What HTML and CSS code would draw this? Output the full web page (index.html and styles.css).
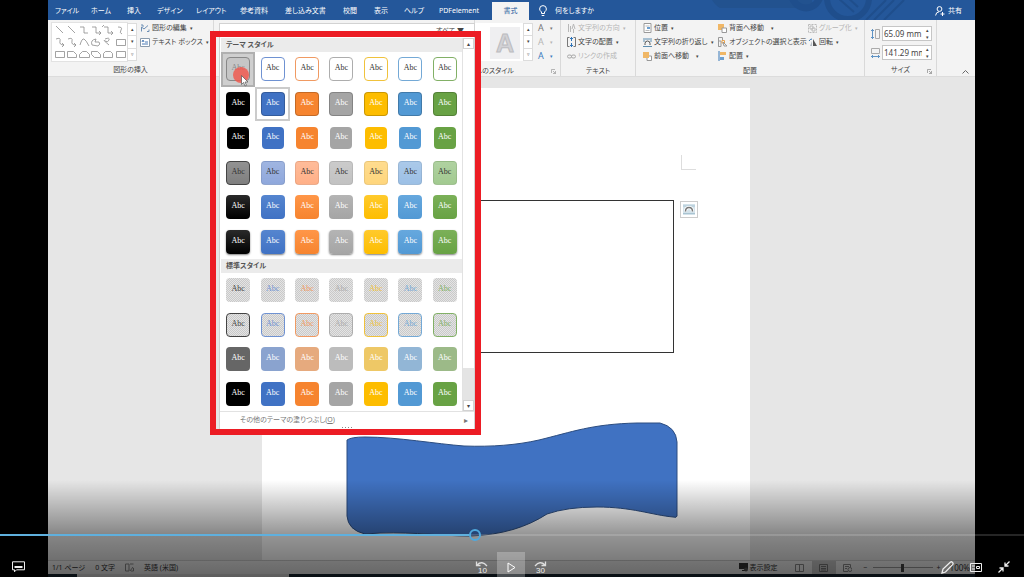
FILE: index.html
```
<!DOCTYPE html>
<html lang="ja">
<head>
  <meta charset="utf-8">
  <title>図形の書式</title>
  <link rel="stylesheet" href="styles.css">
</head>

<body>
  <div class="word">
    <nav class="tabs">
      <svg class="deco" width="250" height="20" viewBox="0 0 250 20">
        <path d="M0 0h112v5q0 3-4 3H20q-4-2-8-8z" fill="#22528f"/>
        <circle cx="106" cy="-6" r="14" fill="none" stroke="#1f4e8c" stroke-width="7"/>
        <circle cx="148" cy="-2" r="21" fill="none" stroke="#1f4e8c" stroke-width="6"/>
        <path d="M138-2l16 14M146-4l12 11M166 20l20-20M174 20l20-20M184 20l20-20" stroke="#1f4e8c" stroke-width="2"/>
      </svg>
      <a href="#">ファイル</a>
      <a href="#">ホーム</a>
      <a href="#">挿入</a>
      <a href="#">デザイン</a>
      <a href="#">レイアウト</a>
      <a href="#">参考資料</a>
      <a href="#">差し込み文書</a>
      <a href="#">校閲</a>
      <a href="#">表示</a>
      <a href="#">ヘルプ</a>
      <a href="#">PDFelement</a>
      <a href="#" class="active">書式</a>
      <a href="#" class="tell">
        <svg width="8" height="12" viewBox="0 0 8 12" fill="none" stroke="#fff"><path d="M2.500 8.500V7Q.6 5.500.6 4a3.400 3.400 0 0 1 6.800 0Q7.400 5.500 5.500 7v1.500zM2.700 10.500h2.600"/></svg>
        何をしますか
      </a>
      <a href="#" class="share">
        <svg width="10" height="10" viewBox="0 0 10 10" fill="none" stroke="#fff"><circle cx="4.500" cy="3" r="2.400"/><path d="M.6 9.500Q1 6 4 5.800M7.500 6v4M5.500 8h4"/></svg>
        共有
      </a>
    </nav>

    <div class="ribbon">
      <section class="group g-insert">
        <div class="group-body">
          <svg class="shapes" width="75" height="38" viewBox="0 0 75 38" fill="none" stroke="#8c8c8c" stroke-width=".8">
            <path d="M4 3l7 7M16 3l7 7M28 4h4v6h4M40 4h4v6h5M47 8l2 2-2 2M52 4h4v6h5M59 8l2 2-2 2M50 4l2-2M66 4q5 0 3 3t1 4"/>
            <path d="M4 16q5-2 4 2t4 4M10 20l2 2-2 2M16 16q5-2 4 2t4 4M22 20l2 2-2 2M28 22q2-7 4-6t5 7M40 22q-2-5 4-6l-1 3h4q2 2-1 4zM53 16q5-2 4 1t-4 1 4 4M64.500 16.500h9v6h-9z"/>
            <path d="M3.500 28.500h9v6h-9zM15.500 28.500h6l3 3v3h-9zM27.500 34.500v-3l3-3h4l3 3v3zM39.500 28.500h6l3 3v3h-6l-3-3zM51.500 34.500v-4l2-2h5l2 2v4zM64.500 28.500h9v6h-9z"/>
          </svg>
          <div class="spin"><button>▴</button><button>▾</button><button>▿</button></div>
          <div class="col">
            <button class="cmd"><svg width="10" height="9" viewBox="0 0 10 9" fill="none" stroke="#6d8fb5"><path d="M1.500 7.500V3L4 5l4-3.500M1 1h2v2M7 7.500h2v-2" /></svg>図形の編集<i>▾</i></button>
            <button class="cmd"><svg width="10" height="9" viewBox="0 0 10 9" fill="#fff" stroke="#8a9bad"><path d="M.5.5h9v8h-9z"/><path d="M2 4l1-2 1 2M5 4h3M2 6h6" stroke="#4a7ab5"/></svg>テキスト ボックス<i>▾</i></button>
          </div>
        </div>
        <h2>図形の挿入</h2>
      </section>

      <section class="group g-style">
        <div class="group-body"></div>
      </section>

      <section class="group g-art">
        <div class="group-body">
          <div class="art"><span>A</span></div>
          <div class="spin"><button>▴</button><button>▾</button><button>▿</button></div>
          <div class="col letters">
            <button class="cmd">A<i>▾</i></button>
            <button class="cmd off">A<i>▾</i></button>
            <button class="cmd glow">A<i>▾</i></button>
          </div>
        </div>
        <h2>へのスタイル</h2>
        <svg class="launch" width="5" height="5" viewBox="0 0 5 5" fill="none" stroke="#999" stroke-width=".7"><path d="M.5 4V.5H4M2 2l2.500 2.500V2M4.500 4.500H2"/></svg>
      </section>

      <section class="group g-text">
        <div class="group-body">
          <div class="col">
            <button class="cmd off"><svg width="9" height="10" viewBox="0 0 9 10" fill="none" stroke="#b8b8b8"><path d="M1.500 1v8M3.500 3v6M5 6l1.500-5L8 6M6.500 6v4"/></svg>文字列の方向<i>▾</i></button>
            <button class="cmd"><svg width="9" height="10" viewBox="0 0 9 10" fill="none" stroke="#777"><path d="M2.500.5h-2v9h2M6.500.5h2v9h-2"/><path d="M4.500 0v4M3 2l1.500-1.500L6 2M4.500 6v4M3 8l1.500 1.500L6 8" stroke="#2f74b8"/></svg>文字の配置<i>▾</i></button>
            <button class="cmd off"><svg width="9" height="5" viewBox="0 0 9 5" fill="none" stroke="#a8a8a8"><rect x=".5" y="1" width="4" height="3" rx="1.500"/><rect x="4.500" y="1" width="4" height="3" rx="1.500"/></svg>リンクの作成</button>
          </div>
        </div>
        <h2>テキスト</h2>
      </section>

      <section class="group g-arrange">
        <div class="group-body">
          <div class="col">
            <button class="cmd"><svg width="9" height="10" viewBox="0 0 9 10" fill="none" stroke="#9a9a9a"><path d="M1 .5h7v9H1z" fill="#fff"/><path d="M2.500 3h4M2.500 7.500h4" stroke="#bbb"/><path d="M4 4h3v2H4z" fill="#6c9fd0" stroke="none"/></svg>位置<i>▾</i></button>
            <button class="cmd"><svg width="9" height="9" viewBox="0 0 9 9" fill="none" stroke="#5c8db0"><path d="M0 1h9M0 8.500h9M0 3h2M7 3h2"/><path d="M2 7V5.500a2.500 2.500 0 0 1 5 0V7" stroke="#555"/></svg>文字列の折り返し<i>▾</i></button>
            <button class="cmd"><svg width="9" height="9" viewBox="0 0 9 9"><path d="M4 4h4.500v4.500H4z" fill="#fff" stroke="#999"/><path d="M0 0h6v6H0z" fill="#f0b766"/></svg>前面へ移動<i class="far">▾</i></button>
          </div>
          <div class="col">
            <button class="cmd"><svg width="9" height="9" viewBox="0 0 9 9"><path d="M0 0h6v6H0z" fill="#f0b766"/><path d="M4 4h4.500v4.500H4z" fill="#fff" stroke="#999"/></svg>背面へ移動<i class="far">▾</i></button>
            <button class="cmd"><svg width="9" height="10" viewBox="0 0 9 10" fill="none" stroke="#999"><path d="M.5 9.500v-9h4v3M.5 4H3v5.500H.5z"/><path d="M4 3.500h2.500V6H4z" stroke="#e8a34e"/><path d="M5 5l4 4H6z" fill="#fff"/></svg>オブジェクトの選択と表示</button>
            <button class="cmd"><svg width="9" height="10" viewBox="0 0 9 10"><path d="M1 0v10" stroke="#3979b8"/><path d="M2 1h6v3H2z" fill="#f0b766"/><path d="M2 6h4v3H2z" fill="#6c9fd0"/></svg>配置<i>▾</i></button>
          </div>
          <div class="col">
            <button class="cmd off"><svg width="9" height="9" viewBox="0 0 9 9" fill="none" stroke="#bbb"><path d="M.5.5h8v8h-8z" stroke-dasharray="2 1"/><path d="M2 2h3v3H2zM4 4h3v3H4z"/></svg>グループ化<i>▾</i></button>
            <button class="cmd"><svg width="9" height="8" viewBox="0 0 9 8"><path d="M5 1v7h4z" fill="#555"/><path d="M4 8V3L2 8z" fill="#b5bcc4"/><path d="M1 3q1-2 3-2" fill="none" stroke="#2f74b8"/></svg>回転<i>▾</i></button>
          </div>
        </div>
        <h2>配置</h2>
      </section>

      <section class="group g-size">
        <div class="group-body sizes">
          <div class="size">
            <label for="height"><svg width="9" height="10" viewBox="0 0 9 10" fill="none"><path d="M1.500 0v10M0 2l1.500-1.500L3 2M0 8l1.500 1.500L3 8" stroke="#5f93c4"/><path d="M4.500.5h4v9h-4z" stroke="#aaa"/></svg></label>
            <input id="height" type="text" value="65.09 mm">
            <div class="step"><button>▴</button><button>▾</button></div>
          </div>
          <div class="size">
            <label for="width"><svg width="9" height="10" viewBox="0 0 9 10" fill="none"><path d="M.5.5h8v5h-8z" stroke="#aaa"/><path d="M0 8.500h9M2 7L.5 8.500 2 10M7 7l1.500 1.500L7 10" stroke="#5f93c4"/></svg></label>
            <input id="width" type="text" value="141.29 mm">
            <div class="step"><button>▴</button><button>▾</button></div>
          </div>
        </div>
        <h2>サイズ</h2>
        <svg class="launch" width="5" height="5" viewBox="0 0 5 5" fill="none" stroke="#888" stroke-width=".7"><path d="M.5 4V.5H4M2 2l2.500 2.500V2M4.500 4.500H2"/></svg>
      </section>
      <button class="collapse"><svg width="7" height="4" viewBox="0 0 7 4" fill="none" stroke="#666"><path d="M.5 3.500l3-3 3 3"/></svg></button>
    </div>

    <div class="canvas">
      <div class="page">
        <div class="corner"></div>
        <div class="textbox"></div>
        <button class="layout-opt"><svg width="12" height="11" viewBox="0 0 12 11" fill="none"><path d="M0 0h12v11H0z" fill="#d3e2ea"/><path d="M0 2h12M0 9.500h12" stroke="#a9c4d2"/><path d="M2.500 7.500q0-4 3.500-4t3.500 4" stroke="#fff" stroke-width="3"/><path d="M2.500 7.500q0-4 3.500-4t3.500 4" stroke="#777" stroke-width="1.500"/></svg></button>
        <svg class="wave" width="332" height="115" viewBox="-1 -1 332 115">
          <path d="M0 17Q4 14 18 14C50 14 90 21 117 23C145 24 170 22 192 17C225 9 245 1 290 0L313 0Q329 4 330 19V93Q330 95 326 94C305 92 285 84 250 84Q220 84 200 91C180 104 155 112 123 113C95 113 70 109 33 110L18 111Q1 107 0 93Z" fill="#4072c2" stroke="#2c4d80" stroke-width="1"/>
        </svg>
      </div>
    </div>

    <footer class="status">
      <span>1/1 ページ</span>
      <span>0 文字</span>
      <svg width="9" height="9" viewBox="0 0 9 9" fill="none" stroke="#888"><path d="M4 1H.5v7H4zM5 1h3.500M5 8l3-4M6 8h2.500V5"/></svg>
      <span>英語 (米国)</span>
      <button class="view-set"><svg width="9" height="9" viewBox="0 0 9 9" fill="#333"><path d="M0 0h9v6H0zM3 7h3v1H3z"/><circle cx="7" cy="6.500" r="2" fill="#555"/></svg>表示設定</button>
      <button class="view"><svg width="9" height="8" viewBox="0 0 9 8" fill="none" stroke="#888"><path d="M.5.5h8v7h-8zM4.500 0v8"/></svg></button>
      <button class="view on"><svg width="9" height="8" viewBox="0 0 9 8" fill="none" stroke="#777"><path d="M.5.5h8v7h-8zM2 2.500h5M2 4.500h5M2 6h5"/></svg></button>
      <button class="view"><svg width="9" height="8" viewBox="0 0 9 8" fill="none" stroke="#888"><path d="M5 7.500H.5v-7h7V3M2 2.500h4M2 4.500h2"/><circle cx="7" cy="5.500" r="2"/></svg></button>
      <button class="zoom-btn">−</button>
      <input class="zoom" type="range" min="10" max="190" value="100" aria-label="ズーム">
      <button class="zoom-btn">+</button>
      <span class="percent">100%</span>
    </footer>
    <div class="taskbar"><div></div></div>

    <!-- shape style drop-down -->
    <div class="menu">
      <button class="all">すべて ▼</button>
      <div class="menu-body">
        <div class="styles">
          <h3>テーマ スタイル</h3>
          <div class="swatches theme" id="theme"></div>
          <h3>標準スタイル</h3>
          <div class="swatches preset" id="preset"></div>
        </div>
        <div class="scroll"><button>▴</button><div class="thumb"></div><div class="track"></div><button>▾</button></div>
      </div>
      <button class="more"><span>その他のテーマの塗りつぶし(<u>O</u>)</span><i>▸</i></button>
      <div class="grip"><i></i><i></i><i></i><i></i></div>
      <div class="click"></div>
      <svg class="pointer" width="8" height="12" viewBox="0 0 8 12"><path d="M.5.5v9l2-2 1.500 3.500 1.500-.7L4 7h3z" fill="#fff" stroke="#555" stroke-width=".7"/></svg>
    </div>
    <div class="highlight"></div>
  </div>

  <div class="player">
    <input class="seek" type="range" min="0" max="1000" value="463" aria-label="再生位置">
    <div class="controls">
      <div class="left">
        <button><svg width="13" height="12" viewBox="0 0 13 12" fill="none" stroke="#eee"><path d="M.5.800h12v8h-8l-2 2v-2h-2z"/><path d="M2.500 6h8" stroke-width="2"/></svg></button>
      </div>
      <div class="center">
        <button><svg width="14" height="14" viewBox="0 0 14 14" fill="none" stroke="#ddd"><path d="M2 5q5-5 10 1M1.500 1.500V5.500H5.500" stroke-width="1.300"/><text x="3" y="13">10</text></svg></button>
        <button class="play"><svg width="9" height="11" viewBox="0 0 9 11" fill="none" stroke="#fff"><path d="M1 1l7 4.500L1 10z"/></svg></button>
        <button><svg width="14" height="14" viewBox="0 0 14 14" fill="none" stroke="#ddd"><path d="M12 5Q7 0 2 6M12.500 1.500V5.500H8.500" stroke-width="1.300"/><text x="3" y="13">30</text></svg></button>
      </div>
      <div class="right">
        <button><svg width="13" height="13" viewBox="0 0 13 13" fill="none" stroke="#eee" stroke-width="1.300"><path d="M1 12l1-4 7.500-7q1-.6 2 .4t.3 2L4.500 11z"/></svg></button>
        <button><svg width="12" height="9" viewBox="0 0 12 9" fill="none" stroke="#eee"><path d="M.5.5h11v8H.5zM2 3h3M2 6h3"/><path d="M6.500 3.500h3v2h-3z"/></svg></button>
        <button><svg width="12" height="12" viewBox="0 0 12 12" fill="none" stroke="#eee" stroke-width="1.300"><path d="M11.500.5L7 5M7 1.500V5h3.500M.5 11.500L5 7M5 10.500V7H1.500"/></svg></button>
      </div>
    </div>
  </div>

  <script>
    var colors = ["black", "blue", "orange", "gray", "gold", "sky", "green"];

    function fill(id, kinds) {
      var out = "";
      for (var i = 0; i < kinds.length; i++) {
        for (var x = 0; x < colors.length; x++) {
          out += '<button class="cell"><span class="swatch ' + kinds[i] + ' ' + colors[x] + '">Abc</span></button>';
        }
      }
      document.getElementById(id).innerHTML = out;
    }

    fill("theme", ["outline", "edged", "plain", "subtle", "moderate", "intense"]);
    fill("preset", ["clear", "clear-line", "half", "solid"]);
    document.getElementById("theme").children[0].className += " hovered";
    document.getElementById("theme").children[8].className += " selected";
  </script>
</body>
</html>
```

FILE: styles.css
```
* {
  box-sizing: border-box;
}
body {
  margin: 0;
  background: #000;
  color: #444;
  font-family: "Noto Sans", "Noto Sans CJK JP", sans-serif;
  font-size: 7px;
  line-height: 14px;
  font-feature-settings: "palt";
}
button {
  padding: 0;
  border: 0;
  background: none;
  color: inherit;
  font: inherit;
  font-feature-settings: inherit;
  white-space: nowrap;
}
svg {
  display: block;
  flex: none;
}
h2, h3 {
  margin: 0;
  font-size: 7px;
  font-weight: normal;
}
i {
  font-style: normal;
  font-size: 5px;
}

.word {
  position: relative;
  display: flex;
  flex-direction: column;
  height: 100vh;
  margin: 0 49px 0 48px;
  overflow: hidden;
}

/* tabs */
.tabs {
  position: relative;
  display: grid;
  grid-template-columns: 36px 36px 30px 39px 44px 45px 58px 31px 30px 35px 53px 37px 1fr auto;
  height: 20px;
  padding-left: 7px;
  background: #24579a;
  line-height: 21px;
}
.tabs a {
  position: relative;
  color: #fff;
  text-decoration: none;
  white-space: nowrap;
}
.tabs .active {
  margin-top: 2px;
  background: #f3f3f3;
  color: #24579a;
  text-align: center;
  line-height: 18px;
}
.tabs .tell, .tabs .share {
  display: flex;
  align-items: center;
  gap: 8px;
  padding-left: 10px;
}
.tabs .share {
  gap: 3px;
  padding-right: 13px;
}
.deco {
  position: absolute;
  top: 0;
  right: 25px;
}

/* ribbon */
.ribbon {
  display: flex;
  height: 57px;
  background: #f3f3f3;
  border-bottom: 1px solid #dcdcdc;
}
.group {
  position: relative;
  display: flex;
  flex-direction: column;
  flex: none;
  padding-top: 1px;
  border-right: 1px solid #d9d9d9;
}
.group-body {
  display: flex;
  height: 43px;
}
.group h2 {
  padding-top: 2px;
  line-height: 12px;
  text-align: center;
}
.g-insert { width: 166px; }
.g-style { width: 261px; }
.g-art { width: 86px; }
.g-text { width: 75px; }
.g-arrange { width: 229px; }
.g-size { width: 72px; }
.g-insert .group-body { padding-left: 4px; }
.g-text .group-body { padding-left: 6px; }
.g-arrange .group-body { padding-left: 7px; }
.g-art h2 {
  text-align: left;
}
.g-arrange .col:nth-child(1) { width: 75px; }
.g-arrange .col:nth-child(2) { width: 90px; }
.launch {
  position: absolute;
  right: 4px;
  bottom: 2px;
}
.shapes {
  margin-top: 2px;
  background: #fff;
  outline: 1px solid #e2e2e2;
}
.spin {
  display: flex;
  flex-direction: column;
  width: 10px;
  height: 38px;
  margin-top: 2px;
  background: #fff;
  border: 1px solid #dcdcdc;
}
.spin button {
  flex: 1;
  font-size: 5px;
  line-height: 11px;
}
.spin button + button {
  border-top: 1px solid #dcdcdc;
}
.spin + .col {
  margin-left: 3px;
}
.col {
  display: flex;
  flex-direction: column;
}
.cmd {
  display: flex;
  align-items: center;
  gap: 3px;
  height: 14px;
}
.cmd svg {
  margin-right: -1px;
}
.cmd .far {
  margin-left: 4px;
}
.off {
  color: #b5b5b5;
}
.art {
  width: 48px;
  height: 38px;
  margin-top: 2px;
  padding: 4px 3px 4px 15px;
  background: #fff;
}
.art span {
  display: block;
  background: #efeff1;
  color: #d2d2d6;
  font: bold 25px/32px "Liberation Sans", sans-serif;
  text-align: center;
  -webkit-text-stroke: 1px #bcbcc0;
}
.letters .cmd {
  margin-left: 2px;
  gap: 6px;
  font-size: 9px;
  color: #777;
}
.letters .off {
  color: #b5b5b5;
}
.letters .glow {
  color: #3b7cc0;
}
.sizes {
  flex-direction: column;
  gap: 4px;
  padding: 5px 4px 0 6px;
}
.size {
  display: flex;
  align-items: center;
  gap: 2px;
}
.size input {
  width: 42px;
  height: 15px;
  padding: 0 2px 0 1px;
  border: 1px solid #c6c6c6;
  border-right: 0;
  background: #fff;
  color: #444;
  font: 8px "Noto Sans", sans-serif;
}
.step {
  display: flex;
  flex-direction: column;
  width: 9px;
  height: 15px;
  margin-left: -2px;
  background: #fff;
  border: 1px solid #c6c6c6;
  border-left: 0;
}
.step button {
  height: 7px;
  font-size: 5px;
  line-height: 6px;
}
.collapse {
  margin: auto 6px 2px auto;
}

/* document */
.canvas {
  flex: 1;
  min-height: 0;
  padding: 11px 11px 0 0;
  background: #e6e6e6;
}
.page {
  position: relative;
  width: 488px;
  height: 100%;
  margin: 0 auto;
  background: #fff;
}
.corner {
  position: absolute;
  top: 67px;
  left: 419px;
  width: 15px;
  height: 15px;
  border: solid #ddd;
  border-width: 0 0 1px 1px;
}
.textbox {
  position: absolute;
  top: 112px;
  left: 85px;
  width: 327px;
  height: 153px;
  border: 1px solid #333;
}
.layout-opt {
  position: absolute;
  top: 113px;
  left: 418px;
  padding: 2px;
  border: 1px solid #ccc;
  background: #fff;
}
.wave {
  position: absolute;
  top: 334px;
  left: 84px;
}

/* status bar */
.status {
  display: flex;
  align-items: center;
  height: 14px;
  padding: 0 5px 0 4px;
  gap: 10px;
  background: #f0f0f0;
  border-top: 1px solid #ccc;
  color: #333;
  white-space: nowrap;
}
.view-set {
  display: flex;
  align-items: center;
  gap: 2px;
  margin-left: auto;
}
.view {
  display: flex;
  align-items: center;
  justify-content: center;
  width: 24px;
  height: 13px;
  margin-right: -10px;
}
.view.on {
  background: #c6c6c6;
}
.zoom-btn {
  width: 6px;
  margin-left: 3px;
}
.zoom + .zoom-btn {
  margin-left: -7px;
}
.zoom {
  width: 60px;
  height: 10px;
  margin: 0 0 0 -6px;
  appearance: none;
  background: linear-gradient(#999, #999) center / 100% 1px no-repeat;
}
.zoom::-webkit-slider-thumb {
  appearance: none;
  width: 3px;
  height: 8px;
  background: #444;
}
.percent {
  margin-left: -2px;
  font-size: 8px;
}
.taskbar {
  flex: none;
  height: 3px;
  background: #15242f;
}
.taskbar div {
  width: 212px;
  height: 3px;
  margin-left: 29px;
  background: #ddd;
}

/* style menu */
.menu {
  position: absolute;
  top: 23px;
  left: 171px;
  width: 256px;
  background: #fff;
  border: 1px solid #d2d2d2;
}
.all {
  display: block;
  height: 14px;
  margin-left: auto;
  margin-right: 10px;
}
.menu-body {
  display: flex;
  padding-left: 1px;
}
.styles {
  width: 242px;
  border-right: 1px solid #e2e2e2;
}
.styles h3 {
  padding-left: 5px;
  background: #ebebeb;
  color: #555;
  font-weight: bold;
}
.swatches {
  display: grid;
  grid-template-columns: repeat(7, 1fr);
  grid-auto-rows: 1fr;
}
.theme { height: 207px; }
.preset { height: 138px; }
.cell {
  display: flex;
  align-items: center;
  justify-content: center;
  border: 2px solid transparent;
}
.hovered {
  background: #cfcfcf;
  border-color: #b0b0b0;
}
.selected {
  border-color: #cbcbcb;
}
.swatch {
  width: 24px;
  height: 24px;
  border: 1px solid transparent;
  border-radius: 4px;
  color: #fff;
  font: 8px/20px "Liberation Serif", serif;
}
.black { --c: #000; --hi: #2a2a2a; --soft: #7f7f7f; --half: #666; --ink: #444; }
.blue { --c: #4072c4; --hi: #5585cf; --soft: #8fa8dc; --half: #8aa3cf; --ink: #6f92d2; }
.orange { --c: #f6842f; --hi: #ff9648; --soft: #ffb088; --half: #e6aa7e; --ink: #f09a62; }
.gray { --c: #a5a5a5; --hi: #b4b4b4; --soft: #c2c2c2; --half: #bcbcbc; --ink: #adadad; }
.gold { --c: #fdbd00; --hi: #ffca2c; --soft: #ffd67c; --half: #eec866; --ink: #f0c23c; }
.sky { --c: #5299d4; --hi: #66a8de; --soft: #9cc0e6; --half: #92b6d6; --ink: #74a9d6; }
.green { --c: #68a244; --hi: #7bb058; --soft: #a2ca90; --half: #9cba88; --ink: #82b066; }
.outline {
  background: #fff;
  border: 1px solid var(--ink);
  color: #333;
}
.hovered .outline {
  background: #c6c6c6;
  border-color: #888;
  color: #888;
}
.edged {
  background: var(--c);
  border-color: rgba(0, 0, 0, .2);
}
.plain {
  width: 22px;
  height: 22px;
  background: var(--c);
  line-height: 18px;
}
.subtle {
  background: linear-gradient(rgba(255, 255, 255, .15), transparent) var(--soft);
  border-color: rgba(0, 0, 0, .08);
  color: #333;
}
.subtle.black {
  border-color: #444;
}
.moderate, .intense {
  background: linear-gradient(var(--hi), var(--c));
  border: 0;
  line-height: 22px;
}
.intense {
  box-shadow: 0 1px 2px rgba(0, 0, 0, .5);
}
.clear, .clear-line {
  background: repeating-conic-gradient(#c9c9c9 0 25%, #e4e4e4 0 50%) 0 0 / 2px 2px;
  color: var(--ink);
}
.clear-line {
  border-color: var(--ink);
}
.half {
  background: var(--half);
}
.solid {
  background: var(--c);
}
.scroll {
  display: flex;
  flex-direction: column;
  width: 11px;
}
.scroll button {
  height: 11px;
  border: 1px solid #d2d2d2;
  font-size: 6px;
  line-height: 8px;
}
.thumb {
  flex: 10;
}
.track {
  flex: 1;
  background: #e4e4e4;
}
.more {
  display: flex;
  justify-content: space-between;
  width: 100%;
  height: 16px;
  padding: 1px 6px 0 20px;
  border-top: 1px solid #e2e2e2;
  color: #777;
}
.more i {
  font-size: 8px;
}
.grip {
  display: flex;
  justify-content: center;
  gap: 2px;
  height: 3px;
}
.grip i {
  width: 1px;
  height: 1px;
  background: #888;
}
.click {
  position: absolute;
  top: 43px;
  left: 13px;
  width: 16px;
  height: 16px;
  border-radius: 50%;
  background: rgba(240, 90, 80, .85);
}
.pointer {
  position: absolute;
  top: 51px;
  left: 21px;
}
.highlight {
  position: absolute;
  top: 31px;
  left: 162px;
  width: 271px;
  height: 404px;
  border: 6px solid #ec1c24;
}

/* video player bar */
.player {
  position: absolute;
  right: 0;
  bottom: 0;
  left: 0;
  padding-top: 49px;
  background: linear-gradient(transparent, rgba(0, 0, 0, .42) 55px, rgba(0, 0, 0, .58));
}
.seek {
  display: block;
  width: 100%;
  height: 12px;
  margin: 0;
  appearance: none;
  background: linear-gradient(to right, #5fb0de 46%, rgba(255, 255, 255, .15) 46%) center / 100% 2px no-repeat;
}
.seek::-webkit-slider-thumb {
  appearance: none;
  width: 12px;
  height: 12px;
  border: 2px solid #4fa9de;
  border-radius: 50%;
}
.controls {
  display: grid;
  grid-template-columns: 1fr auto 1fr;
  align-items: end;
  height: 36px;
  padding: 0 14px 0 12px;
}
.controls button {
  display: flex;
  align-items: center;
  justify-content: center;
  height: 20px;
}
.left, .center, .right {
  display: flex;
  align-items: end;
}
.center {
  gap: 8px;
}
.right {
  justify-content: flex-end;
  gap: 16px;
}
.controls .play {
  width: 28px;
  height: 25px;
  padding-top: 5px;
  background: rgba(255, 255, 255, .25);
}
.controls text {
  fill: #eee;
  stroke: none;
  font: 8px "Liberation Sans", sans-serif;
}
```
